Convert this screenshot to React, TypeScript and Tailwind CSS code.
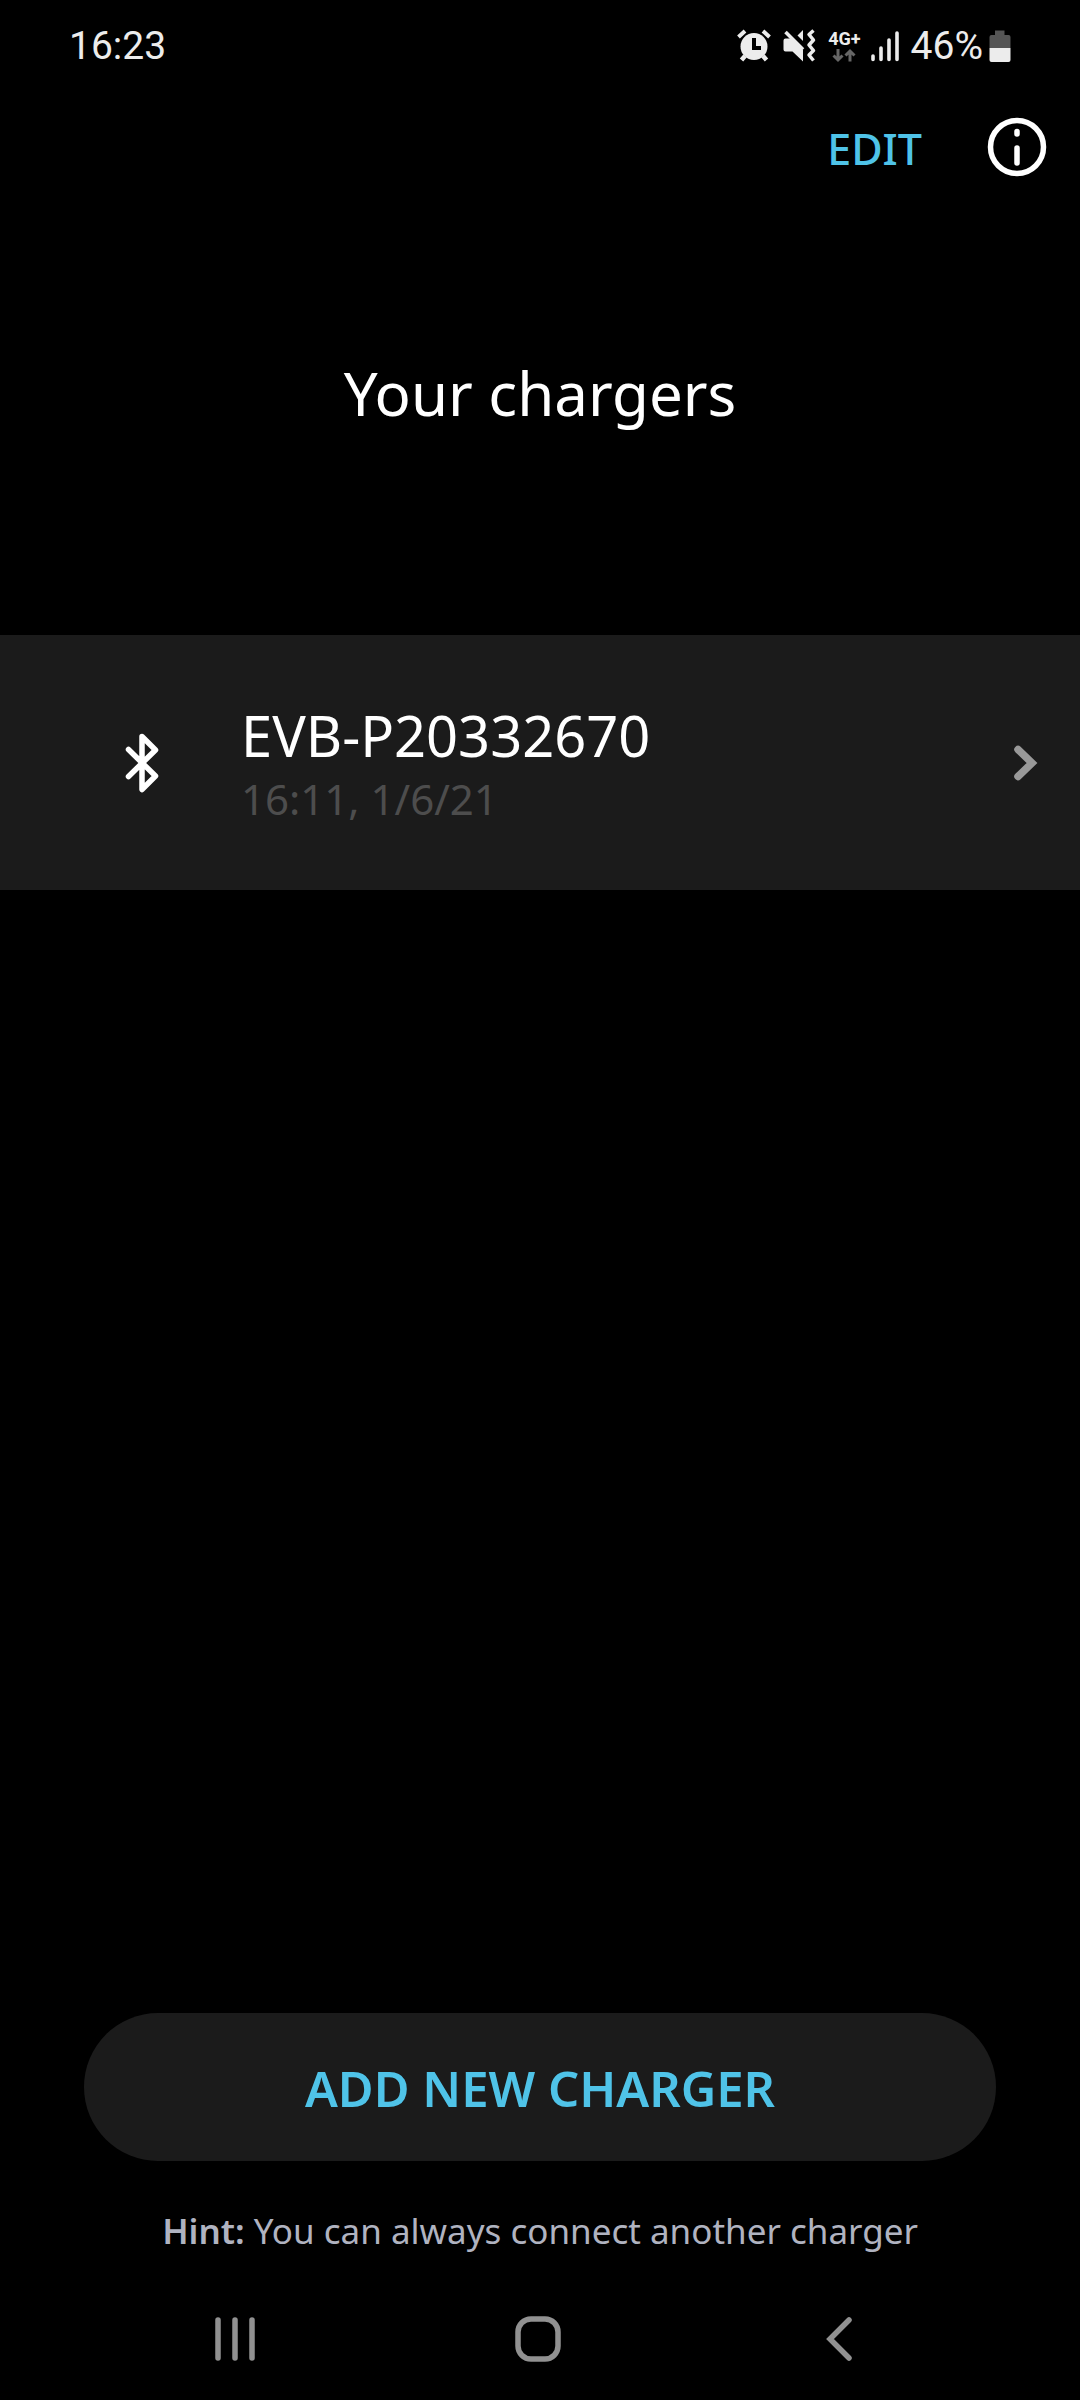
import type { ReactNode } from "react";

function AlarmIcon() {
  return (
    <svg width="34" height="34" viewBox="0 0 34 34" fill="#ececec" aria-hidden="true">
      <path d="M1.500 8 8 2M32.500 8 26 2" stroke="#ececec" strokeWidth="4" />
      <path d="M8 27 4.500 31M26 27 29.500 31" stroke="#ececec" strokeWidth="4.500" />
      <circle cx="17" cy="17.500" r="13.500" />
      <path d="M17 9v10H24" fill="none" stroke="#000" strokeWidth="4" />
    </svg>
  );
}

function MuteVibrateIcon() {
  return (
    <svg width="33" height="34" viewBox="0 0 33 34" fill="#ececec" aria-hidden="true">
      <path d="M20 1v11L14.500 6.500z" />
      <path d="M2.500 9.500H9L20 21v11.500L9.500 22.500h-7Q.5 22.500.5 20.500v-9q0-2 2-2z" />
      <path d="M2.500 3 20 20.500" stroke="#ececec" strokeWidth="3.500" />
      <path
        d="m30.500 1.500-4.500 4 4.500 5.500-4.500 5 4.500 5.500L26 26l4.500 5.500"
        fill="none"
        stroke="#ececec"
        strokeWidth="3.500"
        strokeLinejoin="round"
      />
    </svg>
  );
}

function DataArrows() {
  return (
    <svg width="24" height="15" viewBox="0 0 24 15" fill="none" stroke="#666" strokeWidth="3" aria-hidden="true">
      <path d="M6 1v11M1.500 7.500 6 12l4.500-4.500" />
      <path d="M18 13.500V3M13.500 7.500 18 3l4.500 4.500" />
    </svg>
  );
}

function SignalIcon() {
  return (
    <svg width="28" height="32" viewBox="0 0 28 32" stroke="#ececec" strokeWidth="3.600" strokeLinecap="round" aria-hidden="true">
      <path d="M2 26v3.500M10 18v11.500M18 10v19.500M26 3v26.500" />
    </svg>
  );
}

function BatteryIcon() {
  return (
    <svg width="22" height="34" viewBox="0 0 22 34" aria-hidden="true">
      <path d="M6 1.500h9.500V6h4Q21.500 6 21.500 8v11H.5V8q0-2 2-2H6z" fill="#555" />
      <path d="M.5 19h21v12q0 2-2 2h-17q-2 0-2-2z" fill="#ececec" />
    </svg>
  );
}

function NavButton({ label, children }: { label: string; children: ReactNode }) {
  return (
    <button type="button" aria-label={label} className="flex h-16 w-20 items-center justify-center">
      {children}
    </button>
  );
}

export default function App() {
  return (
    <div className="flex min-h-screen flex-col bg-black font-['Noto_Sans',sans-serif] text-white">
      <header className="flex h-[92px] items-center justify-between pr-[69px] pl-[69px] font-['Roboto',sans-serif] text-[39px] text-[#ececec]">
        <time>16:23</time>
        <div className="flex items-center">
          <AlarmIcon />
          <span className="ml-3 flex">
            <MuteVibrateIcon />
          </span>
          <div className="ml-3 flex flex-col items-center">
            <span className="text-lg leading-[18px] font-bold">4G+</span>
            <DataArrows />
          </div>
          <span className="mr-3 ml-2.5 flex">
            <SignalIcon />
          </span>
          <span>46%</span>
          <span className="ml-1.5 flex">
            <BatteryIcon />
          </span>
        </div>
      </header>

      <div className="flex h-[110px] items-center justify-end gap-[64px] pr-8">
        <button type="button" className="pt-1 text-[43px] leading-[60px] font-medium text-[#4fc3e8]">
          EDIT
        </button>
        <button type="button" aria-label="Information">
          <svg width="62" height="62" viewBox="0 0 62 62" fill="none" stroke="#fff" strokeWidth="5.500" strokeLinecap="round" aria-hidden="true">
            <circle cx="31" cy="31" r="26.500" />
            <path d="M31 15.500v2.500M31 32v15" />
          </svg>
        </button>
      </div>

      <main className="flex flex-1 flex-col">
        <h1 className="pt-[146px] pb-[197px] text-center text-[60px] leading-[90px]">Your chargers</h1>

        <button type="button" className="flex h-[255px] items-center bg-[#1b1b1b] pt-1 pr-10 pb-1 pl-[122px] text-left">
          <svg width="40" height="62" viewBox="0 0 40 62" fill="none" stroke="#fff" strokeWidth="5.500" strokeLinecap="round" strokeLinejoin="round" aria-hidden="true">
            <path d="M6.500 17.500 33.500 44 20 57.500v-53L33.500 18 6.500 44.500" />
          </svg>
          <span className="ml-[79px] flex flex-1 flex-col pt-1">
            <span className="text-[56px] leading-[68px]">EVB-P20332670</span>
            <span className="text-[42px] leading-[60px] text-[#4d4d4d]">16:11, 1/6/21</span>
          </span>
          <svg width="30" height="40" viewBox="0 0 30 40" fill="none" stroke="#999" strokeWidth="7.500" strokeLinecap="round" aria-hidden="true">
            <path d="m8 6.500 14 13.500L8 33.500" />
          </svg>
        </button>

        <div className="mt-auto px-[84px] text-center">
          <button type="button" className="h-[148px] w-full rounded-full bg-[#1b1b1b] pt-1 text-[49px] font-semibold text-[#4fc3e8]">
            ADD NEW CHARGER
          </button>
          <p className="pt-[42px] pb-[48px] text-[35px] leading-[56px] text-[#b0b3c0]">
            <strong className="font-semibold">Hint:</strong> You can always connect another charger
          </p>
        </div>
      </main>

      <nav className="flex h-[93px] items-start justify-between pr-[200px] pl-[195px]" aria-label="System">
        <NavButton label="Recent apps">
          <svg width="44" height="48" viewBox="0 0 44 48" stroke="#919191" strokeWidth="5.500" strokeLinecap="round" aria-hidden="true">
            <path d="M5 5v38M22 5v38M39 5v38" />
          </svg>
        </NavButton>
        <NavButton label="Home">
          <svg width="48" height="48" viewBox="0 0 48 48" fill="none" stroke="#919191" strokeWidth="5.500" aria-hidden="true">
            <rect x="4" y="4" width="40" height="40" rx="13" />
          </svg>
        </NavButton>
        <NavButton label="Back">
          <svg width="32" height="48" viewBox="0 0 32 48" fill="none" stroke="#919191" strokeWidth="5.500" strokeLinecap="round" aria-hidden="true">
            <path d="M25 5 6 24l19 19" />
          </svg>
        </NavButton>
      </nav>
    </div>
  );
}
